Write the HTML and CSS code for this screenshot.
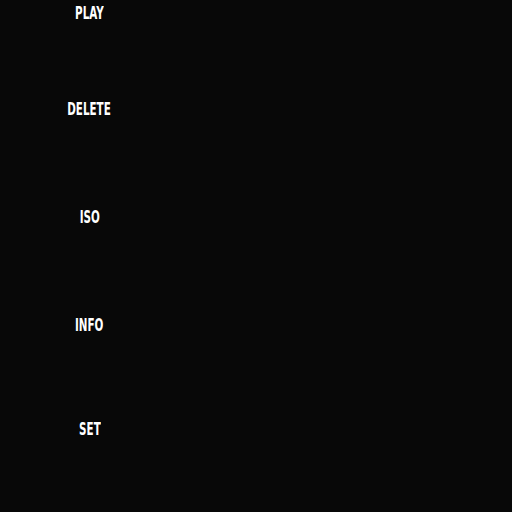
FILE: index.html
```html
<!DOCTYPE html>
<html>
<head>
<meta charset="utf-8">
<link rel="stylesheet" href="styles.css">
</head>
<body>
<nav class="menu">
  <div class="item item-play"><span class="label">PLAY</span></div>
  <div class="item item-delete"><span class="label">DELETE</span></div>
  <div class="item item-iso"><span class="label">ISO</span></div>
  <div class="item item-info"><span class="label">INFO</span></div>
  <div class="item item-set"><span class="label">SET</span></div>
</nav>
</body>
</html>
```
FILE: styles.css
```css
html, body {
  margin: 0;
  padding: 0;
  background: #080808;
  width: 512px;
  height: 512px;
  overflow: hidden;
}
.menu {
  display: flex;
  flex-direction: column;
  width: 179px;
  margin-top: -1px;
}
.item {
  height: 27px;
  display: flex;
  align-items: center;
  justify-content: center;
}
.label {
  display: inline-block;
  font-family: "DejaVu Sans Condensed", "DejaVu Sans", sans-serif;
  font-weight: bold;
  font-size: 18px;
  color: #ffffff;
  transform: scaleX(0.64);
}
.item-delete { margin-top: 68.5px; }
.item-iso { margin-top: 81px; }
.item-info { margin-top: 81px; }
.item-set { margin-top: 77px; }
```
